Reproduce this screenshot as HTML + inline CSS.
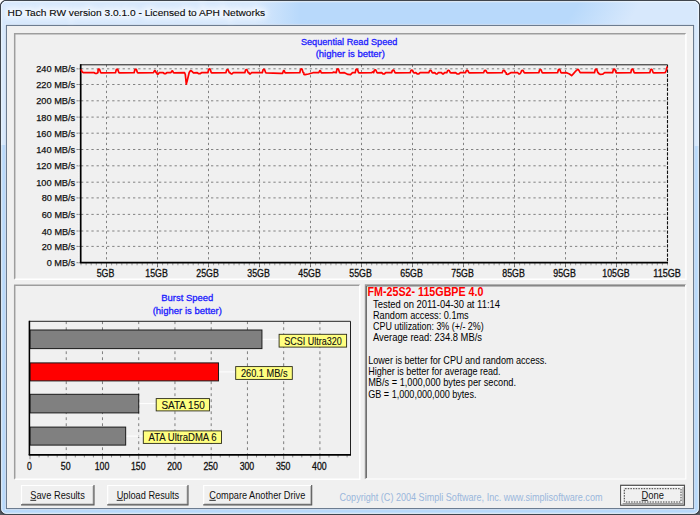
<!DOCTYPE html>
<html><head><meta charset="utf-8"><title>HD Tach</title>
<style>html,body{margin:0;padding:0;background:#fff;overflow:hidden}svg{display:block}text{font-family:"Liberation Sans",sans-serif}</style>
</head><body>
<svg width="700" height="515" viewBox="0 0 700 515" font-family="Liberation Sans, sans-serif">
<defs>
<linearGradient id="tl" x1="0" y1="0" x2="1" y2="0"><stop offset="0" stop-color="#d7e8fc"/><stop offset="0.85" stop-color="#d7e8fc"/><stop offset="1" stop-color="#d7e8fc" stop-opacity="0"/></linearGradient>
<linearGradient id="tr" gradientUnits="userSpaceOnUse" x1="580" y1="0" x2="645" y2="40"><stop offset="0" stop-color="#d7e8fc" stop-opacity="0"/><stop offset="0.7" stop-color="#d7e8fc"/><stop offset="1" stop-color="#d7e8fc"/></linearGradient>
<filter id="glow" x="-5%" y="-100%" width="110%" height="300%"><feGaussianBlur stdDeviation="2.6"/></filter>
<filter id="soft"><feGaussianBlur stdDeviation="0.35"/></filter>
</defs>
<rect x="0" y="0" width="700" height="515" fill="#ffffff"/>
<rect x="0" y="505" width="700" height="10" fill="#555a60"/>
<rect x="0.5" y="0.5" width="699" height="514" rx="5.8" ry="5.8" fill="#b8d9fb" stroke="#3f454d" stroke-width="1.5"/>
<clipPath id="fr"><rect x="1.3" y="1.3" width="697.4" height="512.4" rx="4.8" ry="4.8"/></clipPath>
<g clip-path="url(#fr)">
<rect x="0" y="0" width="8" height="145" fill="#d7e8fc"/>
<rect x="692" y="0" width="8" height="146" fill="#d7e8fc"/>
<rect x="0" y="0" width="300" height="26" fill="url(#tl)"/>
<rect x="540" y="0" width="160" height="26" fill="url(#tr)"/>
</g>
<rect x="1.7" y="1.7" width="696.6" height="511.6" rx="4.4" ry="4.4" fill="none" stroke="#f4f9ff" stroke-width="0.9"/>
<rect x="5.4" y="24.4" width="689.2" height="485.20000000000005" fill="none" stroke="#e4f1ff" stroke-width="0.9" opacity="0.9"/>
<rect x="6.4" y="25.4" width="687.2" height="483.20000000000005" fill="#f0f0f0" stroke="#637388" stroke-width="1.05"/>
<text x="7.6" y="16.4" font-size="9.7" textLength="257.5" lengthAdjust="spacingAndGlyphs" fill="#ffffff" stroke="#ffffff" stroke-width="5" filter="url(#glow)" opacity="0.6">HD Tach RW version 3.0.1.0 - Licensed to APH Networks</text>
<text x="7.6" y="16.4" font-size="9.7" fill="#0a0a0a" stroke="#0a0a0a" stroke-width="0.12" textLength="257.5" lengthAdjust="spacingAndGlyphs" >HD Tach RW version 3.0.1.0 - Licensed to APH Networks</text>
<path d="M14.7 279.2 L14.7 33.7 L685.9 33.7" fill="none" stroke="#9d9d9d" stroke-width="1.5"/>
<path d="M14.7 279.2 L685.9 279.2 L685.9 33.7" fill="none" stroke="#ffffff" stroke-width="1.5"/>
<path d="M14.7 479.2 L14.7 285.2 L359.8 285.2" fill="none" stroke="#9d9d9d" stroke-width="1.5"/>
<path d="M14.7 479.2 L359.8 479.2 L359.8 285.2" fill="none" stroke="#ffffff" stroke-width="1.5"/>
<path d="M365.4 479.0 L365.4 284.8 L685.8 284.8" fill="none" stroke="#9a9a9a" stroke-width="1.2"/>
<path d="M365.4 479.0 L685.8 479.0 L685.8 284.8" fill="none" stroke="#ffffff" stroke-width="1.2"/>
<path d="M366.4 478.1 L366.4 285.9 L685.0 285.9" fill="none" stroke="#606060" stroke-width="1"/>
<text x="349.2" y="45.2" font-size="9.9" fill="#1a1aff" stroke="#1a1aff" stroke-width="0.3" text-anchor="middle" textLength="96.5" lengthAdjust="spacingAndGlyphs" >Sequential Read Speed</text>
<text x="350.3" y="57.2" font-size="9.9" fill="#1a1aff" stroke="#1a1aff" stroke-width="0.3" text-anchor="middle" textLength="69.3" lengthAdjust="spacingAndGlyphs" >(higher is better)</text>
<line x1="81" y1="246.40" x2="667.5" y2="246.40" stroke="#666666" stroke-width="0.8" stroke-dasharray="2.3 2.9"/>
<line x1="81" y1="231.00" x2="667.5" y2="231.00" stroke="#666666" stroke-width="0.8" stroke-dasharray="2.3 2.9"/>
<line x1="81" y1="214.40" x2="667.5" y2="214.40" stroke="#666666" stroke-width="0.8" stroke-dasharray="2.3 2.9"/>
<line x1="81" y1="197.90" x2="667.5" y2="197.90" stroke="#666666" stroke-width="0.8" stroke-dasharray="2.3 2.9"/>
<line x1="81" y1="182.20" x2="667.5" y2="182.20" stroke="#666666" stroke-width="0.8" stroke-dasharray="2.3 2.9"/>
<line x1="81" y1="165.80" x2="667.5" y2="165.80" stroke="#666666" stroke-width="0.8" stroke-dasharray="2.3 2.9"/>
<line x1="81" y1="149.50" x2="667.5" y2="149.50" stroke="#666666" stroke-width="0.8" stroke-dasharray="2.3 2.9"/>
<line x1="81" y1="133.20" x2="667.5" y2="133.20" stroke="#666666" stroke-width="0.8" stroke-dasharray="2.3 2.9"/>
<line x1="81" y1="117.10" x2="667.5" y2="117.10" stroke="#666666" stroke-width="0.8" stroke-dasharray="2.3 2.9"/>
<line x1="81" y1="100.80" x2="667.5" y2="100.80" stroke="#666666" stroke-width="0.8" stroke-dasharray="2.3 2.9"/>
<line x1="81" y1="84.50" x2="667.5" y2="84.50" stroke="#666666" stroke-width="0.8" stroke-dasharray="2.3 2.9"/>
<line x1="81" y1="68.80" x2="667.5" y2="68.80" stroke="#666666" stroke-width="0.8" stroke-dasharray="2.3 2.9"/>
<line x1="106.5" y1="64.8" x2="106.5" y2="262.7" stroke="#666666" stroke-width="0.8" stroke-dasharray="2.3 2.9"/>
<line x1="106.5" y1="262.7" x2="106.5" y2="267.2" stroke="#555" stroke-width="0.9"/>
<line x1="157.5" y1="64.8" x2="157.5" y2="262.7" stroke="#666666" stroke-width="0.8" stroke-dasharray="2.3 2.9"/>
<line x1="157.5" y1="262.7" x2="157.5" y2="267.2" stroke="#555" stroke-width="0.9"/>
<line x1="208.5" y1="64.8" x2="208.5" y2="262.7" stroke="#666666" stroke-width="0.8" stroke-dasharray="2.3 2.9"/>
<line x1="208.5" y1="262.7" x2="208.5" y2="267.2" stroke="#555" stroke-width="0.9"/>
<line x1="259.5" y1="64.8" x2="259.5" y2="262.7" stroke="#666666" stroke-width="0.8" stroke-dasharray="2.3 2.9"/>
<line x1="259.5" y1="262.7" x2="259.5" y2="267.2" stroke="#555" stroke-width="0.9"/>
<line x1="310.5" y1="64.8" x2="310.5" y2="262.7" stroke="#666666" stroke-width="0.8" stroke-dasharray="2.3 2.9"/>
<line x1="310.5" y1="262.7" x2="310.5" y2="267.2" stroke="#555" stroke-width="0.9"/>
<line x1="361.5" y1="64.8" x2="361.5" y2="262.7" stroke="#666666" stroke-width="0.8" stroke-dasharray="2.3 2.9"/>
<line x1="361.5" y1="262.7" x2="361.5" y2="267.2" stroke="#555" stroke-width="0.9"/>
<line x1="412.5" y1="64.8" x2="412.5" y2="262.7" stroke="#666666" stroke-width="0.8" stroke-dasharray="2.3 2.9"/>
<line x1="412.5" y1="262.7" x2="412.5" y2="267.2" stroke="#555" stroke-width="0.9"/>
<line x1="463.5" y1="64.8" x2="463.5" y2="262.7" stroke="#666666" stroke-width="0.8" stroke-dasharray="2.3 2.9"/>
<line x1="463.5" y1="262.7" x2="463.5" y2="267.2" stroke="#555" stroke-width="0.9"/>
<line x1="514.5" y1="64.8" x2="514.5" y2="262.7" stroke="#666666" stroke-width="0.8" stroke-dasharray="2.3 2.9"/>
<line x1="514.5" y1="262.7" x2="514.5" y2="267.2" stroke="#555" stroke-width="0.9"/>
<line x1="565.5" y1="64.8" x2="565.5" y2="262.7" stroke="#666666" stroke-width="0.8" stroke-dasharray="2.3 2.9"/>
<line x1="565.5" y1="262.7" x2="565.5" y2="267.2" stroke="#555" stroke-width="0.9"/>
<line x1="616.5" y1="64.8" x2="616.5" y2="262.7" stroke="#666666" stroke-width="0.8" stroke-dasharray="2.3 2.9"/>
<line x1="616.5" y1="262.7" x2="616.5" y2="267.2" stroke="#555" stroke-width="0.9"/>
<line x1="81.00" y1="262.7" x2="81.00" y2="265.3" stroke="#888" stroke-width="0.8"/>
<line x1="86.10" y1="262.7" x2="86.10" y2="265.3" stroke="#888" stroke-width="0.8"/>
<line x1="91.20" y1="262.7" x2="91.20" y2="265.3" stroke="#888" stroke-width="0.8"/>
<line x1="96.30" y1="262.7" x2="96.30" y2="265.3" stroke="#888" stroke-width="0.8"/>
<line x1="101.40" y1="262.7" x2="101.40" y2="265.3" stroke="#888" stroke-width="0.8"/>
<line x1="106.50" y1="262.7" x2="106.50" y2="265.3" stroke="#888" stroke-width="0.8"/>
<line x1="111.60" y1="262.7" x2="111.60" y2="265.3" stroke="#888" stroke-width="0.8"/>
<line x1="116.70" y1="262.7" x2="116.70" y2="265.3" stroke="#888" stroke-width="0.8"/>
<line x1="121.80" y1="262.7" x2="121.80" y2="265.3" stroke="#888" stroke-width="0.8"/>
<line x1="126.90" y1="262.7" x2="126.90" y2="265.3" stroke="#888" stroke-width="0.8"/>
<line x1="132.00" y1="262.7" x2="132.00" y2="265.3" stroke="#888" stroke-width="0.8"/>
<line x1="137.10" y1="262.7" x2="137.10" y2="265.3" stroke="#888" stroke-width="0.8"/>
<line x1="142.20" y1="262.7" x2="142.20" y2="265.3" stroke="#888" stroke-width="0.8"/>
<line x1="147.30" y1="262.7" x2="147.30" y2="265.3" stroke="#888" stroke-width="0.8"/>
<line x1="152.40" y1="262.7" x2="152.40" y2="265.3" stroke="#888" stroke-width="0.8"/>
<line x1="157.50" y1="262.7" x2="157.50" y2="265.3" stroke="#888" stroke-width="0.8"/>
<line x1="162.60" y1="262.7" x2="162.60" y2="265.3" stroke="#888" stroke-width="0.8"/>
<line x1="167.70" y1="262.7" x2="167.70" y2="265.3" stroke="#888" stroke-width="0.8"/>
<line x1="172.80" y1="262.7" x2="172.80" y2="265.3" stroke="#888" stroke-width="0.8"/>
<line x1="177.90" y1="262.7" x2="177.90" y2="265.3" stroke="#888" stroke-width="0.8"/>
<line x1="183.00" y1="262.7" x2="183.00" y2="265.3" stroke="#888" stroke-width="0.8"/>
<line x1="188.10" y1="262.7" x2="188.10" y2="265.3" stroke="#888" stroke-width="0.8"/>
<line x1="193.20" y1="262.7" x2="193.20" y2="265.3" stroke="#888" stroke-width="0.8"/>
<line x1="198.30" y1="262.7" x2="198.30" y2="265.3" stroke="#888" stroke-width="0.8"/>
<line x1="203.40" y1="262.7" x2="203.40" y2="265.3" stroke="#888" stroke-width="0.8"/>
<line x1="208.50" y1="262.7" x2="208.50" y2="265.3" stroke="#888" stroke-width="0.8"/>
<line x1="213.60" y1="262.7" x2="213.60" y2="265.3" stroke="#888" stroke-width="0.8"/>
<line x1="218.70" y1="262.7" x2="218.70" y2="265.3" stroke="#888" stroke-width="0.8"/>
<line x1="223.80" y1="262.7" x2="223.80" y2="265.3" stroke="#888" stroke-width="0.8"/>
<line x1="228.90" y1="262.7" x2="228.90" y2="265.3" stroke="#888" stroke-width="0.8"/>
<line x1="234.00" y1="262.7" x2="234.00" y2="265.3" stroke="#888" stroke-width="0.8"/>
<line x1="239.10" y1="262.7" x2="239.10" y2="265.3" stroke="#888" stroke-width="0.8"/>
<line x1="244.20" y1="262.7" x2="244.20" y2="265.3" stroke="#888" stroke-width="0.8"/>
<line x1="249.30" y1="262.7" x2="249.30" y2="265.3" stroke="#888" stroke-width="0.8"/>
<line x1="254.40" y1="262.7" x2="254.40" y2="265.3" stroke="#888" stroke-width="0.8"/>
<line x1="259.50" y1="262.7" x2="259.50" y2="265.3" stroke="#888" stroke-width="0.8"/>
<line x1="264.60" y1="262.7" x2="264.60" y2="265.3" stroke="#888" stroke-width="0.8"/>
<line x1="269.70" y1="262.7" x2="269.70" y2="265.3" stroke="#888" stroke-width="0.8"/>
<line x1="274.80" y1="262.7" x2="274.80" y2="265.3" stroke="#888" stroke-width="0.8"/>
<line x1="279.90" y1="262.7" x2="279.90" y2="265.3" stroke="#888" stroke-width="0.8"/>
<line x1="285.00" y1="262.7" x2="285.00" y2="265.3" stroke="#888" stroke-width="0.8"/>
<line x1="290.10" y1="262.7" x2="290.10" y2="265.3" stroke="#888" stroke-width="0.8"/>
<line x1="295.20" y1="262.7" x2="295.20" y2="265.3" stroke="#888" stroke-width="0.8"/>
<line x1="300.30" y1="262.7" x2="300.30" y2="265.3" stroke="#888" stroke-width="0.8"/>
<line x1="305.40" y1="262.7" x2="305.40" y2="265.3" stroke="#888" stroke-width="0.8"/>
<line x1="310.50" y1="262.7" x2="310.50" y2="265.3" stroke="#888" stroke-width="0.8"/>
<line x1="315.60" y1="262.7" x2="315.60" y2="265.3" stroke="#888" stroke-width="0.8"/>
<line x1="320.70" y1="262.7" x2="320.70" y2="265.3" stroke="#888" stroke-width="0.8"/>
<line x1="325.80" y1="262.7" x2="325.80" y2="265.3" stroke="#888" stroke-width="0.8"/>
<line x1="330.90" y1="262.7" x2="330.90" y2="265.3" stroke="#888" stroke-width="0.8"/>
<line x1="336.00" y1="262.7" x2="336.00" y2="265.3" stroke="#888" stroke-width="0.8"/>
<line x1="341.10" y1="262.7" x2="341.10" y2="265.3" stroke="#888" stroke-width="0.8"/>
<line x1="346.20" y1="262.7" x2="346.20" y2="265.3" stroke="#888" stroke-width="0.8"/>
<line x1="351.30" y1="262.7" x2="351.30" y2="265.3" stroke="#888" stroke-width="0.8"/>
<line x1="356.40" y1="262.7" x2="356.40" y2="265.3" stroke="#888" stroke-width="0.8"/>
<line x1="361.50" y1="262.7" x2="361.50" y2="265.3" stroke="#888" stroke-width="0.8"/>
<line x1="366.60" y1="262.7" x2="366.60" y2="265.3" stroke="#888" stroke-width="0.8"/>
<line x1="371.70" y1="262.7" x2="371.70" y2="265.3" stroke="#888" stroke-width="0.8"/>
<line x1="376.80" y1="262.7" x2="376.80" y2="265.3" stroke="#888" stroke-width="0.8"/>
<line x1="381.90" y1="262.7" x2="381.90" y2="265.3" stroke="#888" stroke-width="0.8"/>
<line x1="387.00" y1="262.7" x2="387.00" y2="265.3" stroke="#888" stroke-width="0.8"/>
<line x1="392.10" y1="262.7" x2="392.10" y2="265.3" stroke="#888" stroke-width="0.8"/>
<line x1="397.20" y1="262.7" x2="397.20" y2="265.3" stroke="#888" stroke-width="0.8"/>
<line x1="402.30" y1="262.7" x2="402.30" y2="265.3" stroke="#888" stroke-width="0.8"/>
<line x1="407.40" y1="262.7" x2="407.40" y2="265.3" stroke="#888" stroke-width="0.8"/>
<line x1="412.50" y1="262.7" x2="412.50" y2="265.3" stroke="#888" stroke-width="0.8"/>
<line x1="417.60" y1="262.7" x2="417.60" y2="265.3" stroke="#888" stroke-width="0.8"/>
<line x1="422.70" y1="262.7" x2="422.70" y2="265.3" stroke="#888" stroke-width="0.8"/>
<line x1="427.80" y1="262.7" x2="427.80" y2="265.3" stroke="#888" stroke-width="0.8"/>
<line x1="432.90" y1="262.7" x2="432.90" y2="265.3" stroke="#888" stroke-width="0.8"/>
<line x1="438.00" y1="262.7" x2="438.00" y2="265.3" stroke="#888" stroke-width="0.8"/>
<line x1="443.10" y1="262.7" x2="443.10" y2="265.3" stroke="#888" stroke-width="0.8"/>
<line x1="448.20" y1="262.7" x2="448.20" y2="265.3" stroke="#888" stroke-width="0.8"/>
<line x1="453.30" y1="262.7" x2="453.30" y2="265.3" stroke="#888" stroke-width="0.8"/>
<line x1="458.40" y1="262.7" x2="458.40" y2="265.3" stroke="#888" stroke-width="0.8"/>
<line x1="463.50" y1="262.7" x2="463.50" y2="265.3" stroke="#888" stroke-width="0.8"/>
<line x1="468.60" y1="262.7" x2="468.60" y2="265.3" stroke="#888" stroke-width="0.8"/>
<line x1="473.70" y1="262.7" x2="473.70" y2="265.3" stroke="#888" stroke-width="0.8"/>
<line x1="478.80" y1="262.7" x2="478.80" y2="265.3" stroke="#888" stroke-width="0.8"/>
<line x1="483.90" y1="262.7" x2="483.90" y2="265.3" stroke="#888" stroke-width="0.8"/>
<line x1="489.00" y1="262.7" x2="489.00" y2="265.3" stroke="#888" stroke-width="0.8"/>
<line x1="494.10" y1="262.7" x2="494.10" y2="265.3" stroke="#888" stroke-width="0.8"/>
<line x1="499.20" y1="262.7" x2="499.20" y2="265.3" stroke="#888" stroke-width="0.8"/>
<line x1="504.30" y1="262.7" x2="504.30" y2="265.3" stroke="#888" stroke-width="0.8"/>
<line x1="509.40" y1="262.7" x2="509.40" y2="265.3" stroke="#888" stroke-width="0.8"/>
<line x1="514.50" y1="262.7" x2="514.50" y2="265.3" stroke="#888" stroke-width="0.8"/>
<line x1="519.60" y1="262.7" x2="519.60" y2="265.3" stroke="#888" stroke-width="0.8"/>
<line x1="524.70" y1="262.7" x2="524.70" y2="265.3" stroke="#888" stroke-width="0.8"/>
<line x1="529.80" y1="262.7" x2="529.80" y2="265.3" stroke="#888" stroke-width="0.8"/>
<line x1="534.90" y1="262.7" x2="534.90" y2="265.3" stroke="#888" stroke-width="0.8"/>
<line x1="540.00" y1="262.7" x2="540.00" y2="265.3" stroke="#888" stroke-width="0.8"/>
<line x1="545.10" y1="262.7" x2="545.10" y2="265.3" stroke="#888" stroke-width="0.8"/>
<line x1="550.20" y1="262.7" x2="550.20" y2="265.3" stroke="#888" stroke-width="0.8"/>
<line x1="555.30" y1="262.7" x2="555.30" y2="265.3" stroke="#888" stroke-width="0.8"/>
<line x1="560.40" y1="262.7" x2="560.40" y2="265.3" stroke="#888" stroke-width="0.8"/>
<line x1="565.50" y1="262.7" x2="565.50" y2="265.3" stroke="#888" stroke-width="0.8"/>
<line x1="570.60" y1="262.7" x2="570.60" y2="265.3" stroke="#888" stroke-width="0.8"/>
<line x1="575.70" y1="262.7" x2="575.70" y2="265.3" stroke="#888" stroke-width="0.8"/>
<line x1="580.80" y1="262.7" x2="580.80" y2="265.3" stroke="#888" stroke-width="0.8"/>
<line x1="585.90" y1="262.7" x2="585.90" y2="265.3" stroke="#888" stroke-width="0.8"/>
<line x1="591.00" y1="262.7" x2="591.00" y2="265.3" stroke="#888" stroke-width="0.8"/>
<line x1="596.10" y1="262.7" x2="596.10" y2="265.3" stroke="#888" stroke-width="0.8"/>
<line x1="601.20" y1="262.7" x2="601.20" y2="265.3" stroke="#888" stroke-width="0.8"/>
<line x1="606.30" y1="262.7" x2="606.30" y2="265.3" stroke="#888" stroke-width="0.8"/>
<line x1="611.40" y1="262.7" x2="611.40" y2="265.3" stroke="#888" stroke-width="0.8"/>
<line x1="616.50" y1="262.7" x2="616.50" y2="265.3" stroke="#888" stroke-width="0.8"/>
<line x1="621.60" y1="262.7" x2="621.60" y2="265.3" stroke="#888" stroke-width="0.8"/>
<line x1="626.70" y1="262.7" x2="626.70" y2="265.3" stroke="#888" stroke-width="0.8"/>
<line x1="631.80" y1="262.7" x2="631.80" y2="265.3" stroke="#888" stroke-width="0.8"/>
<line x1="636.90" y1="262.7" x2="636.90" y2="265.3" stroke="#888" stroke-width="0.8"/>
<line x1="642.00" y1="262.7" x2="642.00" y2="265.3" stroke="#888" stroke-width="0.8"/>
<line x1="647.10" y1="262.7" x2="647.10" y2="265.3" stroke="#888" stroke-width="0.8"/>
<line x1="652.20" y1="262.7" x2="652.20" y2="265.3" stroke="#888" stroke-width="0.8"/>
<line x1="657.30" y1="262.7" x2="657.30" y2="265.3" stroke="#888" stroke-width="0.8"/>
<line x1="662.40" y1="262.7" x2="662.40" y2="265.3" stroke="#888" stroke-width="0.8"/>
<line x1="667.50" y1="262.7" x2="667.50" y2="265.3" stroke="#888" stroke-width="0.8"/>
<line x1="76.5" y1="262.70" x2="80" y2="262.70" stroke="#777" stroke-width="0.9"/>
<text x="75.2" y="266.2" font-size="9.9" fill="#111" stroke="#111" stroke-width="0.25" text-anchor="end" textLength="28.5" lengthAdjust="spacingAndGlyphs" >0 MB/s</text>
<line x1="76.5" y1="246.40" x2="80" y2="246.40" stroke="#777" stroke-width="0.9"/>
<text x="75.2" y="249.9" font-size="9.9" fill="#111" stroke="#111" stroke-width="0.25" text-anchor="end" textLength="33.5" lengthAdjust="spacingAndGlyphs" >20 MB/s</text>
<line x1="76.5" y1="231.00" x2="80" y2="231.00" stroke="#777" stroke-width="0.9"/>
<text x="75.2" y="234.5" font-size="9.9" fill="#111" stroke="#111" stroke-width="0.25" text-anchor="end" textLength="33.5" lengthAdjust="spacingAndGlyphs" >40 MB/s</text>
<line x1="76.5" y1="214.40" x2="80" y2="214.40" stroke="#777" stroke-width="0.9"/>
<text x="75.2" y="217.9" font-size="9.9" fill="#111" stroke="#111" stroke-width="0.25" text-anchor="end" textLength="33.5" lengthAdjust="spacingAndGlyphs" >60 MB/s</text>
<line x1="76.5" y1="197.90" x2="80" y2="197.90" stroke="#777" stroke-width="0.9"/>
<text x="75.2" y="201.4" font-size="9.9" fill="#111" stroke="#111" stroke-width="0.25" text-anchor="end" textLength="33.5" lengthAdjust="spacingAndGlyphs" >80 MB/s</text>
<line x1="76.5" y1="182.20" x2="80" y2="182.20" stroke="#777" stroke-width="0.9"/>
<text x="75.2" y="185.7" font-size="9.9" fill="#111" stroke="#111" stroke-width="0.25" text-anchor="end" textLength="39.0" lengthAdjust="spacingAndGlyphs" >100 MB/s</text>
<line x1="76.5" y1="165.80" x2="80" y2="165.80" stroke="#777" stroke-width="0.9"/>
<text x="75.2" y="169.3" font-size="9.9" fill="#111" stroke="#111" stroke-width="0.25" text-anchor="end" textLength="39.0" lengthAdjust="spacingAndGlyphs" >120 MB/s</text>
<line x1="76.5" y1="149.50" x2="80" y2="149.50" stroke="#777" stroke-width="0.9"/>
<text x="75.2" y="153.0" font-size="9.9" fill="#111" stroke="#111" stroke-width="0.25" text-anchor="end" textLength="39.0" lengthAdjust="spacingAndGlyphs" >140 MB/s</text>
<line x1="76.5" y1="133.20" x2="80" y2="133.20" stroke="#777" stroke-width="0.9"/>
<text x="75.2" y="136.7" font-size="9.9" fill="#111" stroke="#111" stroke-width="0.25" text-anchor="end" textLength="39.0" lengthAdjust="spacingAndGlyphs" >160 MB/s</text>
<line x1="76.5" y1="117.10" x2="80" y2="117.10" stroke="#777" stroke-width="0.9"/>
<text x="75.2" y="120.6" font-size="9.9" fill="#111" stroke="#111" stroke-width="0.25" text-anchor="end" textLength="39.0" lengthAdjust="spacingAndGlyphs" >180 MB/s</text>
<line x1="76.5" y1="100.80" x2="80" y2="100.80" stroke="#777" stroke-width="0.9"/>
<text x="75.2" y="104.3" font-size="9.9" fill="#111" stroke="#111" stroke-width="0.25" text-anchor="end" textLength="39.0" lengthAdjust="spacingAndGlyphs" >200 MB/s</text>
<line x1="76.5" y1="84.50" x2="80" y2="84.50" stroke="#777" stroke-width="0.9"/>
<text x="75.2" y="88.0" font-size="9.9" fill="#111" stroke="#111" stroke-width="0.25" text-anchor="end" textLength="39.0" lengthAdjust="spacingAndGlyphs" >220 MB/s</text>
<line x1="76.5" y1="68.80" x2="80" y2="68.80" stroke="#777" stroke-width="0.9"/>
<text x="75.2" y="72.3" font-size="9.9" fill="#111" stroke="#111" stroke-width="0.25" text-anchor="end" textLength="39.0" lengthAdjust="spacingAndGlyphs" >240 MB/s</text>
<line x1="78.8" y1="64.8" x2="78.8" y2="262.7" stroke="#fff" stroke-width="0.9" stroke-dasharray="1 0.7" opacity="0.8"/>
<path d="M80 64.8 L667.5 64.8" fill="none" stroke="#1a1a1a" stroke-width="1"/>
<path d="M667.5 64.8 L667.5 262.7" fill="none" stroke="#111" stroke-width="1.1" stroke-dasharray="3.3 1.3"/>
<path d="M80.7 64.3 L80.7 262.7" fill="none" stroke="#000" stroke-width="1.7"/>
<path d="M79.9 262.7 L668.0 262.7" fill="none" stroke="#000" stroke-width="1.75"/>
<text x="105.5" y="277.2" font-size="10.0" fill="#111" stroke="#111" stroke-width="0.3" text-anchor="middle" textLength="17.6" lengthAdjust="spacingAndGlyphs" >5GB</text>
<text x="156.5" y="277.2" font-size="10.0" fill="#111" stroke="#111" stroke-width="0.3" text-anchor="middle" textLength="22.5" lengthAdjust="spacingAndGlyphs" >15GB</text>
<text x="207.5" y="277.2" font-size="10.0" fill="#111" stroke="#111" stroke-width="0.3" text-anchor="middle" textLength="22.5" lengthAdjust="spacingAndGlyphs" >25GB</text>
<text x="258.5" y="277.2" font-size="10.0" fill="#111" stroke="#111" stroke-width="0.3" text-anchor="middle" textLength="22.5" lengthAdjust="spacingAndGlyphs" >35GB</text>
<text x="309.5" y="277.2" font-size="10.0" fill="#111" stroke="#111" stroke-width="0.3" text-anchor="middle" textLength="22.5" lengthAdjust="spacingAndGlyphs" >45GB</text>
<text x="360.5" y="277.2" font-size="10.0" fill="#111" stroke="#111" stroke-width="0.3" text-anchor="middle" textLength="22.5" lengthAdjust="spacingAndGlyphs" >55GB</text>
<text x="411.5" y="277.2" font-size="10.0" fill="#111" stroke="#111" stroke-width="0.3" text-anchor="middle" textLength="22.5" lengthAdjust="spacingAndGlyphs" >65GB</text>
<text x="462.5" y="277.2" font-size="10.0" fill="#111" stroke="#111" stroke-width="0.3" text-anchor="middle" textLength="22.5" lengthAdjust="spacingAndGlyphs" >75GB</text>
<text x="513.5" y="277.2" font-size="10.0" fill="#111" stroke="#111" stroke-width="0.3" text-anchor="middle" textLength="22.5" lengthAdjust="spacingAndGlyphs" >85GB</text>
<text x="564.5" y="277.2" font-size="10.0" fill="#111" stroke="#111" stroke-width="0.3" text-anchor="middle" textLength="22.5" lengthAdjust="spacingAndGlyphs" >95GB</text>
<text x="616.0" y="277.2" font-size="10.0" fill="#111" stroke="#111" stroke-width="0.3" text-anchor="middle" textLength="27.3" lengthAdjust="spacingAndGlyphs" >105GB</text>
<text x="667.1" y="277.2" font-size="10.0" fill="#111" stroke="#111" stroke-width="0.3" text-anchor="middle" textLength="27.5" lengthAdjust="spacingAndGlyphs" >115GB</text>
<path d="M80.90 69.30 L82.20 71.90 L83.60 72.70 L94.20 72.70 L95.52 73.50 L96.48 73.50 L97.80 72.70 L97.95 72.70 L98.10 69.50 L98.90 69.10 L99.50 69.30 L100.70 72.70 L101.30 72.85 L115.50 72.70 L116.30 69.60 L117.10 69.20 L117.70 69.40 L118.90 72.70 L119.50 72.85 L134.10 72.70 L134.90 69.60 L135.70 69.20 L136.30 69.40 L137.50 72.70 L138.10 72.85 L153.50 72.70 L154.30 71.00 L154.70 70.60 L155.30 70.80 L156.10 72.70 L156.70 72.85 L156.85 72.70 L157.20 74.10 L158.00 74.10 L159.20 72.70 L163.20 72.70 L164.52 73.70 L165.48 73.70 L166.80 72.70 L170.90 72.70 L171.70 71.30 L172.10 70.90 L172.70 71.10 L173.50 72.70 L174.10 72.85 L184.60 72.70 L185.30 74.50 L186.30 84.10 L187.20 80.80 L189.20 72.50 L190.40 70.70 L191.40 70.90 L193.50 72.90 L197.30 72.70 L198.80 73.70 L200.00 73.70 L201.50 72.70 L207.90 72.70 L208.70 69.30 L209.50 68.90 L210.10 69.10 L211.30 72.70 L211.90 72.85 L225.90 72.70 L226.70 69.90 L227.50 69.50 L228.10 69.70 L229.30 72.70 L229.90 72.85 L230.05 72.70 L231.02 73.80 L231.98 73.80 L233.30 72.70 L244.80 72.70 L245.60 69.90 L246.40 69.50 L247.00 69.70 L248.20 72.70 L248.80 72.85 L248.95 72.70 L249.54 74.00 L250.26 74.00 L251.40 72.70 L262.30 72.70 L263.10 69.70 L263.90 69.30 L264.50 69.50 L265.70 72.70 L266.30 72.85 L280.50 73.40 L282.60 73.30 L282.75 72.70 L283.40 71.00 L283.70 70.60 L284.30 70.80 L285.00 72.70 L285.60 72.85 L299.80 72.70 L300.60 69.30 L301.40 68.90 L302.00 69.10 L303.20 72.70 L303.80 72.85 L303.95 74.40 L305.00 74.70 L308.50 74.00 L313.00 72.70 L318.80 72.70 L319.60 71.00 L319.90 70.60 L320.50 70.80 L321.20 72.70 L321.80 72.85 L332.50 72.70 L333.30 72.20 L336.20 72.70 L337.00 69.30 L337.80 68.90 L338.40 69.10 L339.60 72.70 L340.20 72.85 L344.50 72.70 L348.00 74.40 L350.50 74.60 L352.50 72.70 L355.20 72.70 L356.00 69.40 L356.80 69.00 L357.40 69.20 L358.60 72.70 L359.20 72.85 L371.50 72.70 L373.50 71.50 L373.60 72.70 L374.40 70.20 L375.20 69.80 L375.80 70.00 L377.00 72.70 L377.60 72.85 L381.70 72.70 L383.14 74.00 L384.26 74.00 L385.70 72.70 L391.60 72.70 L392.40 70.40 L393.20 70.00 L393.80 70.20 L395.00 72.70 L395.60 72.85 L410.20 72.70 L411.00 70.40 L411.80 70.00 L412.40 70.20 L413.60 72.70 L414.20 72.85 L415.90 72.70 L417.40 74.00 L418.60 74.00 L420.10 72.70 L428.80 72.70 L429.60 70.70 L430.40 70.30 L431.00 70.50 L432.20 72.70 L432.80 72.85 L434.80 72.70 L436.12 74.00 L437.08 74.00 L438.40 72.70 L441.40 72.70 L442.60 73.90 L443.40 73.90 L444.60 72.70 L446.80 72.70 L447.60 70.70 L448.50 70.30 L449.10 70.50 L450.40 72.70 L451.00 72.85 L455.60 72.70 L457.28 74.00 L458.72 74.00 L460.40 72.70 L465.50 72.70 L466.30 70.70 L467.10 70.30 L467.70 70.50 L468.90 72.70 L469.50 72.85 L483.60 72.70 L484.40 70.70 L485.20 70.30 L485.80 70.50 L487.00 72.70 L487.60 72.85 L502.20 72.70 L503.00 70.70 L503.80 70.30 L504.40 70.50 L505.60 72.70 L506.20 72.85 L506.35 74.20 L508.00 74.30 L510.80 72.70 L517.80 72.70 L518.94 74.00 L519.66 74.00 L520.80 72.70 L520.80 72.70 L521.60 70.70 L522.40 70.30 L523.00 70.50 L524.20 72.70 L524.80 72.85 L538.80 72.70 L539.60 69.90 L540.40 69.50 L541.00 69.70 L542.20 72.70 L542.80 72.85 L557.60 72.70 L558.40 69.70 L559.20 69.30 L559.80 69.50 L561.00 72.70 L561.60 72.85 L566.60 72.70 L569.50 74.00 L571.60 75.60 L573.50 73.60 L576.00 70.80 L577.70 69.40 L578.60 69.80 L580.20 72.70 L594.50 72.70 L595.30 69.40 L596.10 69.00 L596.70 69.20 L597.90 72.70 L598.50 72.85 L598.60 73.60 L600.00 74.30 L602.80 74.20 L604.60 72.70 L612.60 72.70 L613.40 69.40 L614.20 69.00 L614.80 69.20 L616.00 72.70 L616.60 72.85 L630.80 72.70 L631.60 69.40 L632.40 69.00 L633.00 69.20 L634.20 72.70 L634.80 72.85 L649.80 72.70 L650.60 69.70 L651.40 69.30 L652.00 69.50 L653.20 72.70 L653.80 72.85 L665.20 72.70 L666.20 70.50 L667.20 66.50" fill="none" stroke="#ff0000" stroke-width="1.7" stroke-linejoin="round" stroke-linecap="butt"/>
<text x="187.3" y="301.1" font-size="9.9" fill="#1a1aff" stroke="#1a1aff" stroke-width="0.3" text-anchor="middle" textLength="52" lengthAdjust="spacingAndGlyphs" >Burst Speed</text>
<text x="187.3" y="313.5" font-size="9.9" fill="#1a1aff" stroke="#1a1aff" stroke-width="0.3" text-anchor="middle" textLength="69.3" lengthAdjust="spacingAndGlyphs" >(higher is better)</text>
<line x1="66.24" y1="321.3" x2="66.24" y2="454.8" stroke="#707070" stroke-width="0.9" stroke-dasharray="2.8 3.2"/>
<line x1="102.48" y1="321.3" x2="102.48" y2="454.8" stroke="#707070" stroke-width="0.9" stroke-dasharray="2.8 3.2"/>
<line x1="138.72" y1="321.3" x2="138.72" y2="454.8" stroke="#707070" stroke-width="0.9" stroke-dasharray="2.8 3.2"/>
<line x1="174.96" y1="321.3" x2="174.96" y2="454.8" stroke="#707070" stroke-width="0.9" stroke-dasharray="2.8 3.2"/>
<line x1="211.20" y1="321.3" x2="211.20" y2="454.8" stroke="#707070" stroke-width="0.9" stroke-dasharray="2.8 3.2"/>
<line x1="247.44" y1="321.3" x2="247.44" y2="454.8" stroke="#707070" stroke-width="0.9" stroke-dasharray="2.8 3.2"/>
<line x1="283.68" y1="321.3" x2="283.68" y2="454.8" stroke="#707070" stroke-width="0.9" stroke-dasharray="2.8 3.2"/>
<line x1="319.92" y1="321.3" x2="319.92" y2="454.8" stroke="#707070" stroke-width="0.9" stroke-dasharray="2.8 3.2"/>
<line x1="30.00" y1="454.8" x2="30.00" y2="459.3" stroke="#777" stroke-width="0.8"/>
<line x1="39.06" y1="454.8" x2="39.06" y2="457.40000000000003" stroke="#777" stroke-width="0.8"/>
<line x1="48.12" y1="454.8" x2="48.12" y2="457.40000000000003" stroke="#777" stroke-width="0.8"/>
<line x1="57.18" y1="454.8" x2="57.18" y2="457.40000000000003" stroke="#777" stroke-width="0.8"/>
<line x1="66.24" y1="454.8" x2="66.24" y2="459.3" stroke="#777" stroke-width="0.8"/>
<line x1="75.30" y1="454.8" x2="75.30" y2="457.40000000000003" stroke="#777" stroke-width="0.8"/>
<line x1="84.36" y1="454.8" x2="84.36" y2="457.40000000000003" stroke="#777" stroke-width="0.8"/>
<line x1="93.42" y1="454.8" x2="93.42" y2="457.40000000000003" stroke="#777" stroke-width="0.8"/>
<line x1="102.48" y1="454.8" x2="102.48" y2="459.3" stroke="#777" stroke-width="0.8"/>
<line x1="111.54" y1="454.8" x2="111.54" y2="457.40000000000003" stroke="#777" stroke-width="0.8"/>
<line x1="120.60" y1="454.8" x2="120.60" y2="457.40000000000003" stroke="#777" stroke-width="0.8"/>
<line x1="129.66" y1="454.8" x2="129.66" y2="457.40000000000003" stroke="#777" stroke-width="0.8"/>
<line x1="138.72" y1="454.8" x2="138.72" y2="459.3" stroke="#777" stroke-width="0.8"/>
<line x1="147.78" y1="454.8" x2="147.78" y2="457.40000000000003" stroke="#777" stroke-width="0.8"/>
<line x1="156.84" y1="454.8" x2="156.84" y2="457.40000000000003" stroke="#777" stroke-width="0.8"/>
<line x1="165.90" y1="454.8" x2="165.90" y2="457.40000000000003" stroke="#777" stroke-width="0.8"/>
<line x1="174.96" y1="454.8" x2="174.96" y2="459.3" stroke="#777" stroke-width="0.8"/>
<line x1="184.02" y1="454.8" x2="184.02" y2="457.40000000000003" stroke="#777" stroke-width="0.8"/>
<line x1="193.08" y1="454.8" x2="193.08" y2="457.40000000000003" stroke="#777" stroke-width="0.8"/>
<line x1="202.14" y1="454.8" x2="202.14" y2="457.40000000000003" stroke="#777" stroke-width="0.8"/>
<line x1="211.20" y1="454.8" x2="211.20" y2="459.3" stroke="#777" stroke-width="0.8"/>
<line x1="220.26" y1="454.8" x2="220.26" y2="457.40000000000003" stroke="#777" stroke-width="0.8"/>
<line x1="229.32" y1="454.8" x2="229.32" y2="457.40000000000003" stroke="#777" stroke-width="0.8"/>
<line x1="238.38" y1="454.8" x2="238.38" y2="457.40000000000003" stroke="#777" stroke-width="0.8"/>
<line x1="247.44" y1="454.8" x2="247.44" y2="459.3" stroke="#777" stroke-width="0.8"/>
<line x1="256.50" y1="454.8" x2="256.50" y2="457.40000000000003" stroke="#777" stroke-width="0.8"/>
<line x1="265.56" y1="454.8" x2="265.56" y2="457.40000000000003" stroke="#777" stroke-width="0.8"/>
<line x1="274.62" y1="454.8" x2="274.62" y2="457.40000000000003" stroke="#777" stroke-width="0.8"/>
<line x1="283.68" y1="454.8" x2="283.68" y2="459.3" stroke="#777" stroke-width="0.8"/>
<line x1="292.74" y1="454.8" x2="292.74" y2="457.40000000000003" stroke="#777" stroke-width="0.8"/>
<line x1="301.80" y1="454.8" x2="301.80" y2="457.40000000000003" stroke="#777" stroke-width="0.8"/>
<line x1="310.86" y1="454.8" x2="310.86" y2="457.40000000000003" stroke="#777" stroke-width="0.8"/>
<line x1="319.92" y1="454.8" x2="319.92" y2="459.3" stroke="#777" stroke-width="0.8"/>
<line x1="328.98" y1="454.8" x2="328.98" y2="457.40000000000003" stroke="#777" stroke-width="0.8"/>
<line x1="338.04" y1="454.8" x2="338.04" y2="457.40000000000003" stroke="#777" stroke-width="0.8"/>
<line x1="347.10" y1="454.8" x2="347.10" y2="457.40000000000003" stroke="#777" stroke-width="0.8"/>
<line x1="261.94" y1="339.30" x2="279.1" y2="339.30" stroke="#fff" stroke-width="1"/>
<rect x="30" y="330.0" width="231.94" height="18.60" fill="#808080" stroke="#1a1a1a" stroke-width="1"/>
<rect x="279.1" y="334.3" width="67.50" height="12.80" fill="#ffff80" stroke="#2a2a18" stroke-width="0.9"/>
<text x="313.05" y="344.55" font-size="10.3" fill="#111" stroke="#111" stroke-width="0.12" text-anchor="middle" textLength="57.5" lengthAdjust="spacingAndGlyphs" >SCSI Ultra320</text>
<line x1="218.52" y1="371.90" x2="235.7" y2="371.90" stroke="#fff" stroke-width="1"/>
<rect x="30" y="362.9" width="188.52" height="18.00" fill="#ff0000" stroke="#1a1a1a" stroke-width="1"/>
<rect x="235.7" y="366.6" width="56.60" height="12.80" fill="#ffff80" stroke="#2a2a18" stroke-width="0.9"/>
<text x="264.2" y="376.85" font-size="10.3" fill="#111" stroke="#111" stroke-width="0.12" text-anchor="middle" textLength="46.6" lengthAdjust="spacingAndGlyphs" >260.1 MB/s</text>
<line x1="138.72" y1="403.60" x2="156.2" y2="403.60" stroke="#fff" stroke-width="1"/>
<rect x="30" y="394.3" width="108.72" height="18.60" fill="#808080" stroke="#1a1a1a" stroke-width="1"/>
<rect x="156.2" y="398.6" width="53.30" height="12.30" fill="#ffff80" stroke="#2a2a18" stroke-width="0.9"/>
<text x="183.04999999999998" y="408.6" font-size="10.3" fill="#111" stroke="#111" stroke-width="0.12" text-anchor="middle" textLength="43.3" lengthAdjust="spacingAndGlyphs" >SATA 150</text>
<line x1="125.67" y1="436.10" x2="143.3" y2="436.10" stroke="#fff" stroke-width="1"/>
<rect x="30" y="427.1" width="95.67" height="18.00" fill="#808080" stroke="#1a1a1a" stroke-width="1"/>
<rect x="143.3" y="430.9" width="78.20" height="12.50" fill="#ffff80" stroke="#2a2a18" stroke-width="0.9"/>
<text x="182.6" y="441.0" font-size="10.3" fill="#111" stroke="#111" stroke-width="0.12" text-anchor="middle" textLength="68.2" lengthAdjust="spacingAndGlyphs" >ATA UltraDMA 6</text>
<path d="M29 321.3 L350.5 321.3 L350.5 454.8" fill="none" stroke="#222" stroke-width="1"/>
<path d="M29.4 320.8 L29.4 454.90000000000003" fill="none" stroke="#000" stroke-width="1.55"/>
<path d="M28.7 454.90000000000003 L351.0 454.90000000000003" fill="none" stroke="#000" stroke-width="1.85"/>
<text x="29.5" y="469.7" font-size="10.0" fill="#111" stroke="#111" stroke-width="0.3" text-anchor="middle" textLength="4.8" lengthAdjust="spacingAndGlyphs" >0</text>
<text x="65.74" y="469.7" font-size="10.0" fill="#111" stroke="#111" stroke-width="0.3" text-anchor="middle" textLength="9.8" lengthAdjust="spacingAndGlyphs" >50</text>
<text x="101.98" y="469.7" font-size="10.0" fill="#111" stroke="#111" stroke-width="0.3" text-anchor="middle" textLength="14.6" lengthAdjust="spacingAndGlyphs" >100</text>
<text x="138.22" y="469.7" font-size="10.0" fill="#111" stroke="#111" stroke-width="0.3" text-anchor="middle" textLength="14.6" lengthAdjust="spacingAndGlyphs" >150</text>
<text x="174.46" y="469.7" font-size="10.0" fill="#111" stroke="#111" stroke-width="0.3" text-anchor="middle" textLength="14.6" lengthAdjust="spacingAndGlyphs" >200</text>
<text x="210.7" y="469.7" font-size="10.0" fill="#111" stroke="#111" stroke-width="0.3" text-anchor="middle" textLength="14.6" lengthAdjust="spacingAndGlyphs" >250</text>
<text x="246.94" y="469.7" font-size="10.0" fill="#111" stroke="#111" stroke-width="0.3" text-anchor="middle" textLength="14.6" lengthAdjust="spacingAndGlyphs" >300</text>
<text x="283.18" y="469.7" font-size="10.0" fill="#111" stroke="#111" stroke-width="0.3" text-anchor="middle" textLength="14.6" lengthAdjust="spacingAndGlyphs" >350</text>
<text x="319.42" y="469.7" font-size="10.0" fill="#111" stroke="#111" stroke-width="0.3" text-anchor="middle" textLength="14.6" lengthAdjust="spacingAndGlyphs" >400</text>
<text x="367.5" y="296.4" font-size="12" fill="#ff0000" textLength="116" lengthAdjust="spacingAndGlyphs" font-weight="bold" >FM-25S2- 115GBPE 4.0</text>
<text x="373" y="307.6" font-size="11.6" fill="#000" textLength="127" lengthAdjust="spacingAndGlyphs" >Tested on 2011-04-30 at 11:14</text>
<text x="373" y="318.85" font-size="11.6" fill="#000" textLength="95.7" lengthAdjust="spacingAndGlyphs" >Random access: 0.1ms</text>
<text x="373" y="330.1" font-size="11.6" fill="#000" textLength="110.7" lengthAdjust="spacingAndGlyphs" >CPU utilization: 3% (+/- 2%)</text>
<text x="373" y="341.35" font-size="11.6" fill="#000" textLength="109" lengthAdjust="spacingAndGlyphs" >Average read: 234.8 MB/s</text>
<text x="368.2" y="363.9" font-size="11.6" fill="#000" textLength="178.6" lengthAdjust="spacingAndGlyphs" >Lower is better for CPU and random access.</text>
<text x="368.2" y="375.15" font-size="11.6" fill="#000" textLength="132.3" lengthAdjust="spacingAndGlyphs" >Higher is better for average read.</text>
<text x="368.2" y="386.4" font-size="11.6" fill="#000" textLength="147.8" lengthAdjust="spacingAndGlyphs" >MB/s = 1,000,000 bytes per second.</text>
<text x="368.2" y="397.65" font-size="11.6" fill="#000" textLength="108.3" lengthAdjust="spacingAndGlyphs" >GB = 1,000,000,000 bytes.</text>
<rect x="21" y="485" width="73.50" height="20.40" fill="#f0f0f0"/>
<path d="M21.5 505.4 L21.5 485.5 L94.5 485.5" fill="none" stroke="#ffffff" stroke-width="1.2"/>
<path d="M22 504.09999999999997 L93.2 504.09999999999997 L93.2 486" fill="none" stroke="#a0a0a0" stroke-width="1"/>
<path d="M21 504.9 L94.0 504.9 L94.0 485" fill="none" stroke="#555" stroke-width="1.1"/>
<text x="30.3" y="498.8" font-size="11" fill="#111" textLength="54.5" lengthAdjust="spacingAndGlyphs" >Save Results</text>
<line x1="30.3" y1="500.3" x2="36.2" y2="500.3" stroke="#111" stroke-width="0.9"/>
<rect x="107.2" y="485" width="81.30" height="20.40" fill="#f0f0f0"/>
<path d="M107.7 505.4 L107.7 485.5 L188.5 485.5" fill="none" stroke="#ffffff" stroke-width="1.2"/>
<path d="M108.2 504.09999999999997 L187.2 504.09999999999997 L187.2 486" fill="none" stroke="#a0a0a0" stroke-width="1"/>
<path d="M107.2 504.9 L188.0 504.9 L188.0 485" fill="none" stroke="#555" stroke-width="1.1"/>
<text x="116.7" y="498.8" font-size="11" fill="#111" textLength="62.4" lengthAdjust="spacingAndGlyphs" >Upload Results</text>
<line x1="116.7" y1="500.3" x2="122.8" y2="500.3" stroke="#111" stroke-width="0.9"/>
<rect x="203.2" y="485" width="109.00" height="20.40" fill="#f0f0f0"/>
<path d="M203.7 505.4 L203.7 485.5 L312.2 485.5" fill="none" stroke="#ffffff" stroke-width="1.2"/>
<path d="M204.2 504.09999999999997 L310.9 504.09999999999997 L310.9 486" fill="none" stroke="#a0a0a0" stroke-width="1"/>
<path d="M203.2 504.9 L311.7 504.9 L311.7 485" fill="none" stroke="#555" stroke-width="1.1"/>
<text x="209.3" y="498.8" font-size="11" fill="#111" textLength="96.0" lengthAdjust="spacingAndGlyphs" >Compare Another Drive</text>
<line x1="209.3" y1="500.3" x2="215.8" y2="500.3" stroke="#111" stroke-width="0.9"/>
<rect x="620.7" y="485.3" width="63.7" height="19.9" fill="#f0f0f0" stroke="#4f4f4f" stroke-width="1.25"/>
<path d="M621.9 504.4 L621.9 486.5 L683.6 486.5" fill="none" stroke="#ffffff" stroke-width="1.1"/>
<path d="M622.6 503.6 L682.9 503.6 L682.9 487.2" fill="none" stroke="#9a9a9a" stroke-width="1.1"/>
<rect x="624.3" y="488.7" width="56.7" height="13.3" rx="0.8" fill="none" stroke="#1a1a1a" stroke-width="0.85" stroke-dasharray="1.5 1.15"/>
<text x="641.6" y="498.9" font-size="11" fill="#111" textLength="22.4" lengthAdjust="spacingAndGlyphs" >Done</text>
<line x1="641.6" y1="500.3" x2="647.8" y2="500.3" stroke="#111" stroke-width="0.9"/>
<text x="339.5" y="500.8" font-size="11" fill="#9ab7dc" textLength="263" lengthAdjust="spacingAndGlyphs" >Copyright (C) 2004 Simpli Software, Inc. www.simplisoftware.com</text>
</svg>
</body></html>
